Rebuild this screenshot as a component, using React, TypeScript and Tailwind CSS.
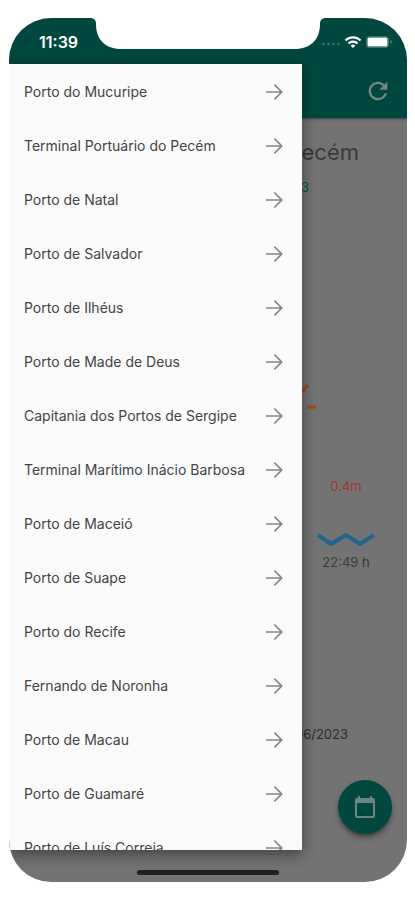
import React from "react";
import { MdCalendarToday, MdRefresh, MdWifi } from "react-icons/md";

const ports = [
  "Porto do Mucuripe",
  "Terminal Portuário do Pecém",
  "Porto de Natal",
  "Porto de Salvador",
  "Porto de Ilhéus",
  "Porto de Made de Deus",
  "Capitania dos Portos de Sergipe",
  "Terminal Marítimo Inácio Barbosa",
  "Porto de Maceió",
  "Porto de Suape",
  "Porto do Recife",
  "Fernando de Noronha",
  "Porto de Macau",
  "Porto de Guamaré",
  "Porto de Luís Correia",
];

const Notch = () => (
  <svg
    viewBox="0 0 236 32"
    className="absolute top-0 left-1/2 w-[236px] h-8 -translate-x-1/2"
    aria-hidden="true"
  >
    <path
      d="M0 0 C4 0 6 2 6 6 C6 22 16 31 31 31 H205 C220 31 230 22 230 6 C230 2 232 0 236 0 Z"
      fill="#fff"
    />
  </svg>
);

const ArrowForward = () => (
  <svg
    viewBox="0 0 24 24"
    className="w-6 h-6 shrink-0"
    fill="none"
    stroke="#858585"
    strokeWidth="1.6"
    aria-hidden="true"
  >
    <path d="M4 12 H19.4 M12.4 4.6 L19.8 12 L12.4 19.4" />
  </svg>
);

const StatusBar = () => (
  <div className="relative flex h-[46px] items-center justify-between pt-0.5 pl-[30px] pr-[15px] text-white">
    <Notch />
    <span className="text-base font-semibold">11:39</span>
    <div className="flex items-center">
      <svg viewBox="0 0 18 4" className="mr-1 mt-1 w-[18px] h-1" aria-hidden="true">
        {[2, 7, 12, 17].map((x) => (
          <circle key={x} cx={x - 0.5} cy="2" r="1.3" fill="#3f736c" />
        ))}
      </svg>
      <MdWifi className="mr-1 w-[18px] h-[18px]" />
      <svg viewBox="0 0 26 12" className="w-[26px] h-3" aria-hidden="true">
        <rect x="0.5" y="0.5" width="22" height="11" rx="2.5" fill="none" stroke="#3f736c" />
        <rect x="1.5" y="1.5" width="20" height="9" rx="1.5" fill="#fff" />
        <path d="M24 4 a2 2 0 0 1 0 4 Z" fill="#3f736c" />
      </svg>
    </div>
  </div>
);

const Forecast = () => (
  <main className="relative flex flex-col flex-1 bg-[#737373] text-[#3a3a3a]">
    <h1 className="mt-[18px] self-end pr-12 text-[22px] leading-8 whitespace-nowrap">
      do Pecém
    </h1>
    <p className="mt-[11px] pr-[98px] text-right text-[13px] leading-4 text-[#00594d]">
      2023
    </p>
    <svg viewBox="0 0 32 32" className="mt-[185px] ml-[276px] w-8 h-8" aria-hidden="true">
      <path d="M17 12 L23 5 M22 27 H31" fill="none" stroke="#a04a18" strokeWidth="3" />
    </svg>
    <div className="mt-16 mr-4 w-[90px] self-end text-center text-[13px] leading-5">
      <p className="text-[#9c3a30]">0.4m</p>
      <svg viewBox="0 0 58 16" className="mx-auto mt-9 w-[58px] h-4" aria-hidden="true">
        <path
          d="M1 3 L14 12 L29 3 L43 12 L57 3"
          fill="none"
          stroke="#23658a"
          strokeWidth="4"
          strokeLinejoin="round"
        />
      </svg>
      <p className="mt-1">22:49 h</p>
    </div>
    <p className="mt-[152px] pr-[59px] text-right text-[13px] leading-5 text-[#2b2b2b]">
      06/2023
    </p>
    <button
      aria-label="Escolher data"
      className="absolute bottom-12 right-[15px] flex w-[54px] h-[54px] items-center justify-center rounded-full bg-[#00483f] text-[#6f8582] shadow-md shadow-black/40"
    >
      <MdCalendarToday className="w-6 h-6" />
    </button>
    <div className="absolute bottom-[7px] left-1/2 w-[142px] h-[5px] -translate-x-1/2 rounded-full bg-[#202020]" />
  </main>
);

const Drawer = () => (
  <nav className="z-20 col-start-1 row-start-1 mt-[46px] mb-8 min-h-0 w-[293px] overflow-hidden bg-[#fafafa] shadow-[0_4px_14px_rgba(0,0,0,0.45)]">
    <ul className="pt-px">
      {ports.map((port) => (
        <li key={port}>
          <button className="flex h-[54px] w-full items-center justify-between pl-[15px] pr-4 text-left text-sm text-[#444]">
            {port}
            <ArrowForward />
          </button>
        </li>
      ))}
    </ul>
  </nav>
);

const App = () => {
  return (
    <div className="flex h-screen bg-white py-[18px] pl-[9px] pr-2 font-['Inter',sans-serif]">
      <div className="grid flex-1 grid-cols-1 grid-rows-1 overflow-hidden rounded-[42px]">
        <div className="col-start-1 row-start-1 flex flex-col">
          <header className="relative z-10 bg-[#00483f] shadow-sm shadow-black/30">
            <StatusBar />
            <div className="flex h-[54px] items-center justify-end pr-[15px]">
              <button aria-label="Atualizar" className="text-[#7b8482]">
                <MdRefresh className="w-7 h-7 stroke-current" />
              </button>
            </div>
          </header>
          <Forecast />
        </div>
        <Drawer />
      </div>
    </div>
  );
};

export default App;
